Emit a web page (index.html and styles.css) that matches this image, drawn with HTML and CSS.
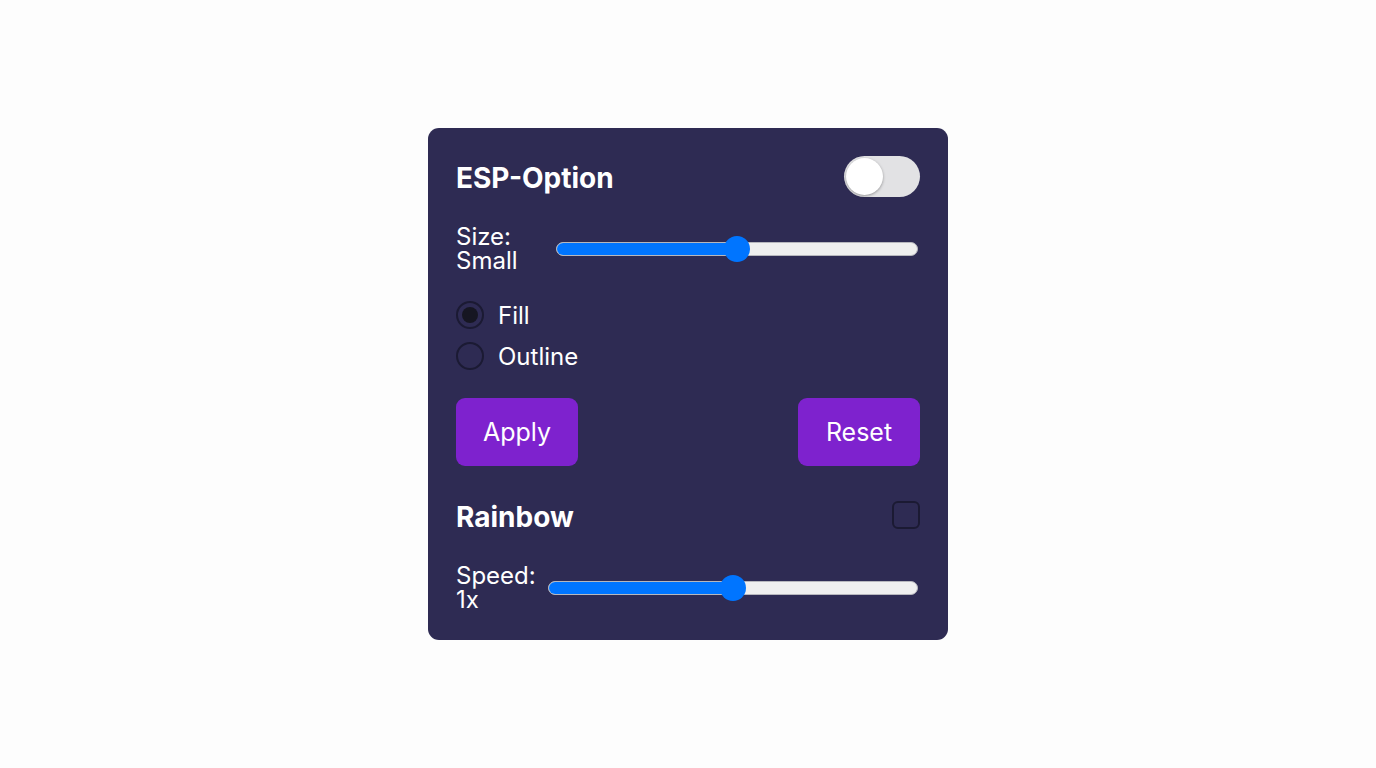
FILE: index.html
```html
<!DOCTYPE html>
<html lang="en">
<head>
<meta charset="utf-8">
<title>ESP Options</title>
<link rel="stylesheet" href="styles.css">
</head>
<body>
<div class="card">
  <div class="row head">
    <h2 class="title">ESP-Option</h2>
    <div class="toggle"><span class="knob"></span></div>
  </div>
  <div class="row slider-row">
    <span class="slabel size-label">Size: Small</span>
    <div class="slider">
      <div class="track"><div class="fill" style="width:50%"></div></div>
      <span class="thumb" style="left:50%"></span>
    </div>
  </div>
  <div class="radios">
    <label class="radio"><span class="circle checked"></span><span>Fill</span></label>
    <label class="radio"><span class="circle"></span><span>Outline</span></label>
  </div>
  <div class="row buttons">
    <button class="btn">Apply</button>
    <button class="btn">Reset</button>
  </div>
  <div class="row head rainbow">
    <h2 class="title">Rainbow</h2>
    <span class="checkbox"></span>
  </div>
  <div class="row slider-row">
    <span class="slabel speed-label">Speed: 1x</span>
    <div class="slider">
      <div class="track"><div class="fill" style="width:50%"></div></div>
      <span class="thumb" style="left:50%"></span>
    </div>
  </div>
</div>
</body>
</html>
```
FILE: styles.css
```css
* { box-sizing: border-box; }
html, body { margin: 0; padding: 0; }
body {
  background: #fdfdfd;
  height: 768px;
  display: flex;
  align-items: center;
  justify-content: center;
  font-family: Inter, "Noto Sans", sans-serif;
  color: #ffffff;
}
.card {
  width: 520px;
  background: #2e2b53;
  border-radius: 11px;
  padding: 28px;
  display: flex;
  flex-direction: column;
  gap: 28px;
}
.row {
  display: flex;
  align-items: center;
  justify-content: space-between;
}
.head { height: 41px; }
.rainbow { height: 42px; }
.title {
  margin: 0;
  padding-top: 5px;
  font-size: 28px;
  font-weight: 700;
  line-height: 1.2;
}
.toggle {
  width: 76px;
  height: 41px;
  border-radius: 21px;
  background: #e2e2e4;
  position: relative;
}
.knob {
  position: absolute;
  left: 2px;
  top: 2px;
  width: 37px;
  height: 37px;
  border-radius: 50%;
  background: #ffffff;
  box-shadow: 0 1px 3px rgba(0,0,0,0.35);
}
.slider-row {
  height: 48px;
  justify-content: flex-start;
  gap: 10px;
}
.slabel {
  font-size: 24px;
  line-height: 24px;
  flex: none;
}
.size-label { width: 90px; }
.speed-label { width: 82px; }
.slider {
  flex: 1;
  height: 26px;
  position: relative;
  display: flex;
  align-items: center;
  margin-right: 2px;
}
.track {
  width: 100%;
  height: 14px;
  border-radius: 7px;
  background: #efefef;
  border: 1px solid #b7b7bd;
  overflow: hidden;
}
.fill {
  height: 100%;
  background: #0075ff;
}
.thumb {
  position: absolute;
  top: 0;
  width: 26px;
  height: 26px;
  margin-left: -13px;
  border-radius: 50%;
  background: #0075ff;
}
.radios {
  display: flex;
  flex-direction: column;
  gap: 13px;
}
.radio {
  display: flex;
  align-items: center;
  gap: 14px;
  height: 28px;
  font-size: 24px;
}
.circle {
  width: 28px;
  height: 28px;
  border-radius: 50%;
  border: 2px solid #1b1a33;
  display: flex;
  align-items: center;
  justify-content: center;
}
.circle.checked::after {
  content: "";
  width: 16px;
  height: 16px;
  border-radius: 50%;
  background: #161622;
}
.btn {
  width: 122px;
  height: 68px;
  border: none;
  border-radius: 9px;
  background: #7e22ce;
  color: #ffffff;
  font-family: Inter, "Noto Sans", sans-serif;
  font-size: 25px;
}
.checkbox {
  width: 28px;
  height: 28px;
  border: 2px solid #1b1a33;
  border-radius: 6px;
}
```
